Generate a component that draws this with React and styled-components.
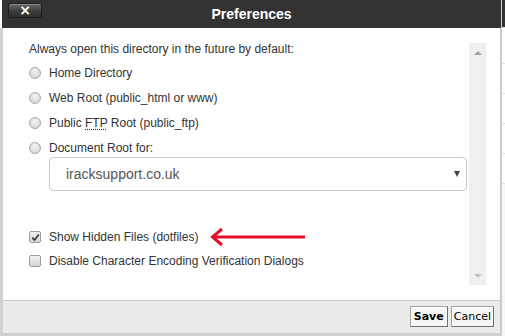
import React from "react";
import styled, { createGlobalStyle } from "styled-components";

const Global = createGlobalStyle`
  html, body { margin: 0; padding: 0; background: #fff; }
  body { font-family: "Liberation Sans", Arial, sans-serif; }
  * { box-sizing: border-box; }
`;

const Screen = styled.div`
  width: 505px;
  height: 336px;
  display: flex;
  overflow: hidden;
  background: #fff;
`;

const Dialog = styled.div`
  width: 501px;
  height: 100%;
  display: flex;
  flex-direction: column;
`;

const PageEdge = styled.div`
  flex: 1;
  border-left: 1px solid #cfcfcf;
  background: #f7f7f7;
  display: flex;
  flex-direction: column;
`;

const EdgeCell = styled.div`
  height: ${(p) => p.h}px;
  border-bottom: 1px solid #e2e2e2;
  background: ${(p) => p.bg || "#fff"};
`;

const TitleBar = styled.div`
  height: 28px;
  margin-left: 2px;
  background: #333;
  display: grid;
  grid-template-columns: 1fr auto 1fr;
`;

const CloseButton = styled.div`
  justify-self: start;
  margin: 3px 0 0 6px;
  width: 34px;
  height: 15px;
  border-radius: 3px;
  border: 1px solid #1c1c1c;
  background: linear-gradient(#6a6a6a, #3c3c3c 55%, #2e2e2e);
  box-shadow: inset 0 1px 0 rgba(255, 255, 255, 0.25);
  color: #fff;
  font-weight: bold;
  font-size: 14px;
  line-height: 12px;
  text-align: center;
  font-family: "DejaVu Sans", sans-serif;
`;

const Title = styled.div`
  color: #fff;
  font-weight: bold;
  font-size: 14px;
  line-height: 28px;
`;

const Body = styled.div`
  flex: 1;
  display: flex;
  flex-direction: column;
  border-left: 3px solid #d2d2d2;
  border-right: 1px solid #c8c8c8;
  border-bottom: 3px solid #cfcfcf;
`;

const Content = styled.div`
  flex: 1;
  display: flex;
  background: #fff;
`;

const Main = styled.div`
  flex: 1;
  padding: 14px 0 0 26px;
  color: #333;
  font-size: 12px;
`;

const Heading = styled.div`
  line-height: 14px;
  margin-bottom: 8px;
`;

const List = styled.div`
  display: flex;
  flex-direction: column;
  gap: ${(p) => p.gap}px;
  margin-top: ${(p) => p.top || 0}px;
`;

const Row = styled.div`
  height: 18px;
  display: flex;
  align-items: center;
  gap: 8px;
  line-height: 14px;
  white-space: nowrap;
`;

const Radio = styled.span`
  width: 12px;
  height: 12px;
  border-radius: 50%;
  border: 1px solid #a9a9a9;
  background: radial-gradient(circle at 50% 35%, #f4f4f4, #dadada 70%, #cfcfcf);
  flex: none;
`;

const Checkbox = styled.span`
  width: 12px;
  height: 12px;
  border-radius: 2px;
  border: 1px solid #9d9d9d;
  background: linear-gradient(#f2f2f2, #d6d6d6);
  flex: none;
  display: flex;
  align-items: center;
  justify-content: center;
`;

const Abbr = styled.abbr`
  text-decoration: underline dotted;
  text-underline-offset: 2px;
`;

const SelectBox = styled.div`
  margin-left: 20px;
  width: 418px;
  height: 34px;
  border: 1px solid #cbcbcb;
  border-radius: 4px;
  background: #fff;
  display: flex;
  align-items: center;
  justify-content: space-between;
  padding: 0 6px 0 16px;
  font-size: 14px;
  color: #555;
`;

const Caret = styled.span`
  width: 0;
  height: 0;
  border-left: 3.5px solid transparent;
  border-right: 3.5px solid transparent;
  border-top: 6px solid #444;
`;

const Scrollbar = styled.div`
  width: 17px;
  margin: 15px 14px 15px 0;
  background: #f0f0f0;
  display: flex;
  flex-direction: column;
  justify-content: space-between;
  align-items: center;
  padding: 8px 0 7px;
`;

const ScrollArrow = styled.span`
  width: 0;
  height: 0;
  border-left: 4px solid transparent;
  border-right: 4px solid transparent;
  ${(p) =>
    p.up
      ? "border-bottom: 4px solid #a3a3a3;"
      : "border-top: 4px solid #c2c2c2;"}
`;

const Footer = styled.div`
  height: 33px;
  border-top: 1px solid #c9c9c9;
  background: #ebebeb;
  display: flex;
  justify-content: flex-end;
  align-items: center;
  gap: 3px;
  padding: 0 6px 1px 0;
`;

const Button = styled.button`
  height: 21px;
  padding: 0 ${(p) => (p.primary ? 3 : 2)}px;
  border: 1px solid #a2a2a2;
  border-right-color: #6e6e6e;
  border-bottom-color: #6e6e6e;
  box-shadow: inset 1px 1px 0 #fff;
  background: #f6f6f6;
  font-family: "DejaVu Sans", Tahoma, sans-serif;
  font-size: 11px;
  font-weight: ${(p) => (p.primary ? "bold" : "normal")};
  color: #000;
  border-radius: 0;
  margin: 0;
`;

const ArrowSvg = styled.svg`
  margin-left: 4px;
  flex: none;
`;

const Check = () => (
  <svg width="9" height="9" viewBox="0 0 9 9">
    <path d="M1.2 4.6 L3.5 7 L7.8 1.6" fill="none" stroke="#333" strokeWidth="1.6" />
  </svg>
);

const RedArrow = () => (
  <ArrowSvg width="96" height="20" viewBox="0 0 96 20">
    <g stroke="#e60f26" strokeWidth="3" fill="none" strokeLinecap="butt">
      <path d="M2 10 H95" />
      <path d="M12 2 L2.5 10 L12 18" strokeLinejoin="miter" />
    </g>
  </ArrowSvg>
);

export default function App() {
  return (
    <>
      <Global />
      <Screen>
        <Dialog>
          <TitleBar>
            <CloseButton>×</CloseButton>
            <Title>Preferences</Title>
            <span />
          </TitleBar>
          <Body>
            <Content>
              <Main>
                <Heading>Always open this directory in the future by default:</Heading>
                <List gap={7}>
                  <Row>
                    <Radio />
                    Home Directory
                  </Row>
                  <Row>
                    <Radio />
                    Web Root (public_html or www)
                  </Row>
                  <Row>
                    <Radio />
                    <span>
                      Public <Abbr title="File Transfer Protocol">FTP</Abbr> Root (public_ftp)
                    </span>
                  </Row>
                  <div>
                    <Row>
                      <Radio />
                      Document Root for:
                    </Row>
                    <SelectBox>
                      iracksupport.co.uk
                      <Caret />
                    </SelectBox>
                  </div>
                </List>
                <List gap={6} top={37}>
                  <Row>
                    <Checkbox>
                      <Check />
                    </Checkbox>
                    Show Hidden Files (dotfiles)
                    <RedArrow />
                  </Row>
                  <Row>
                    <Checkbox />
                    Disable Character Encoding Verification Dialogs
                  </Row>
                </List>
              </Main>
              <Scrollbar>
                <ScrollArrow up />
                <ScrollArrow />
              </Scrollbar>
            </Content>
            <Footer>
              <Button primary>Save</Button>
              <Button>Cancel</Button>
            </Footer>
          </Body>
        </Dialog>
        <PageEdge>
          <EdgeCell h={28} bg="#333" />
          <EdgeCell h={36} />
          <EdgeCell h={30} />
          <EdgeCell h={30} />
          <EdgeCell h={30} />
          <EdgeCell h={30} />
        </PageEdge>
      </Screen>
    </>
  );
}
